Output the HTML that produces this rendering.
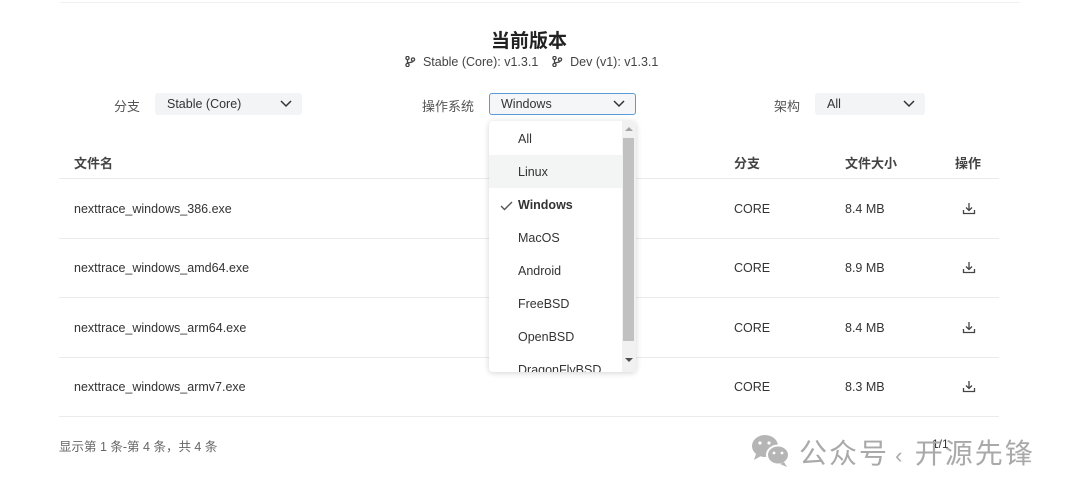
<!DOCTYPE html>
<html><head><meta charset="utf-8"><style>
*{margin:0;padding:0;box-sizing:border-box}
body{width:1080px;height:496px;background:#fff;font-family:"Liberation Sans","Noto Sans CJK SC",sans-serif;color:#333;position:relative;overflow:hidden;font-size:12.5px}
.a{position:absolute;white-space:nowrap}
.sel{position:absolute;height:22px;background:#f3f4f5;border-radius:3px;font-size:12.5px;padding:4px 12px;color:#333}
.chev{position:absolute;right:10px;top:7px}
.hr{position:absolute;left:59px;width:940px;height:1px;background:#ebebeb}
.row{font-size:12.5px;color:#333}
.dd{position:absolute;left:489px;top:121px;width:147px;height:251px;background:#fff;border-radius:4px;box-shadow:0 1px 6px rgba(0,0,0,.18);overflow:hidden}
.it{position:absolute;left:0;width:133px;height:33px;font-size:12.5px;padding-left:29px;line-height:35px;color:#333}
</style></head><body>
<div class="a" style="left:60px;top:2px;width:960px;height:1px;background:#f0f0f0"></div>
<div class="a" style="left:0;width:1080px;top:26px;text-align:center;font-size:19px;font-weight:bold;color:#222;padding-right:22px">当前版本</div>
<div class="a" style="left:405px;top:55px;font-size:12.5px;color:#444">
<svg width="11" height="11" viewBox="0 0 11 11" style="vertical-align:-1px"><circle cx="2.5" cy="2" r="1.6" fill="none" stroke="#444" stroke-width="1.3"/><circle cx="2.5" cy="9" r="1.6" fill="none" stroke="#444" stroke-width="1.3"/><circle cx="8" cy="3.5" r="1.6" fill="none" stroke="#444" stroke-width="1.3"/><path d="M2.5 3.6V7.4M8 5C8 7 3 6 2.5 7.4" stroke="#444" stroke-width="1.3" fill="none"/></svg>&nbsp; Stable (Core): v1.3.1 &nbsp;&nbsp;
<svg width="11" height="11" viewBox="0 0 11 11" style="vertical-align:-1px"><circle cx="2.5" cy="2" r="1.6" fill="none" stroke="#444" stroke-width="1.3"/><circle cx="2.5" cy="9" r="1.6" fill="none" stroke="#444" stroke-width="1.3"/><circle cx="8" cy="3.5" r="1.6" fill="none" stroke="#444" stroke-width="1.3"/><path d="M2.5 3.6V7.4M8 5C8 7 3 6 2.5 7.4" stroke="#444" stroke-width="1.3" fill="none"/></svg>&nbsp; Dev (v1): v1.3.1</div>

<div class="a" style="left:114px;top:96px;color:#555;font-size:13px">分支</div>
<div class="sel" style="left:155px;top:93px;width:147px">Stable (Core)<svg class="chev" width="12" height="8" viewBox="0 0 12 8"><path d="M1 1l5 5 5-5" stroke="#333" stroke-width="1.5" fill="none"/></svg></div>
<div class="a" style="left:422px;top:96px;color:#555;font-size:13px">操作系统</div>
<div class="sel" style="left:489px;top:93px;width:147px;border:1px solid #5b9bd5;background:#f5f6f7;padding:3px 11px">Windows<svg class="chev" width="12" height="8" viewBox="0 0 12 8" style="top:6px"><path d="M1 1l5 5 5-5" stroke="#333" stroke-width="1.5" fill="none"/></svg></div>
<div class="a" style="left:774px;top:96px;color:#555;font-size:13px">架构</div>
<div class="sel" style="left:815px;top:93px;width:110px">All<svg class="chev" width="12" height="8" viewBox="0 0 12 8"><path d="M1 1l5 5 5-5" stroke="#333" stroke-width="1.5" fill="none"/></svg></div>

<div class="a" style="left:74px;top:153px;font-weight:bold;color:#444;font-size:13px">文件名</div>
<div class="a" style="left:734px;top:153px;font-weight:bold;color:#444;font-size:13px">分支</div>
<div class="a" style="left:845px;top:153px;font-weight:bold;color:#444;font-size:13px">文件大小</div>
<div class="a" style="left:955px;top:153px;font-weight:bold;color:#444;font-size:13px">操作</div>
<div class="hr" style="top:178px"></div>
<div class="hr" style="top:238px"></div>
<div class="hr" style="top:297px"></div>
<div class="hr" style="top:357px"></div>
<div class="hr" style="top:416px"></div>

<div class="a row" style="left:74px;top:202px">nexttrace_windows_386.exe</div>
<div class="a row" style="left:74px;top:261px">nexttrace_windows_amd64.exe</div>
<div class="a row" style="left:74px;top:321px">nexttrace_windows_arm64.exe</div>
<div class="a row" style="left:74px;top:380px">nexttrace_windows_armv7.exe</div>
<div class="a row" style="left:734px;top:202px">CORE</div>
<div class="a row" style="left:734px;top:261px">CORE</div>
<div class="a row" style="left:734px;top:321px">CORE</div>
<div class="a row" style="left:734px;top:380px">CORE</div>
<div class="a row" style="left:845px;top:202px">8.4 MB</div>
<div class="a row" style="left:845px;top:261px">8.9 MB</div>
<div class="a row" style="left:845px;top:321px">8.4 MB</div>
<div class="a row" style="left:845px;top:380px">8.3 MB</div>
<svg class="a" style="left:962px;top:202px" width="14" height="13" viewBox="0 0 14 13"><path d="M7 1v7M4 5.5l3 3 3-3M1.5 8v3.5h11V8" stroke="#444" stroke-width="1.3" fill="none"/></svg>
<svg class="a" style="left:962px;top:261px" width="14" height="13" viewBox="0 0 14 13"><path d="M7 1v7M4 5.5l3 3 3-3M1.5 8v3.5h11V8" stroke="#444" stroke-width="1.3" fill="none"/></svg>
<svg class="a" style="left:962px;top:321px" width="14" height="13" viewBox="0 0 14 13"><path d="M7 1v7M4 5.5l3 3 3-3M1.5 8v3.5h11V8" stroke="#444" stroke-width="1.3" fill="none"/></svg>
<svg class="a" style="left:962px;top:380px" width="14" height="13" viewBox="0 0 14 13"><path d="M7 1v7M4 5.5l3 3 3-3M1.5 8v3.5h11V8" stroke="#444" stroke-width="1.3" fill="none"/></svg>

<div class="a" style="left:59px;top:436px;color:#666">显示第 1 条-第 4 条，共 4 条</div>
<div class="a" style="left:932px;top:437px;font-size:12px;color:#333">1/1</div>

<svg class="a" style="left:750px;top:433px" width="42" height="36" viewBox="0 0 42 36"><ellipse cx="15" cy="13" rx="13" ry="11" fill="#b5b5b5"/><path d="M6 21l-2 6 7-4z" fill="#b5b5b5"/><ellipse cx="28" cy="22" rx="11" ry="9.5" fill="#b5b5b5" stroke="#fff" stroke-width="2"/><path d="M34 29l3 5-7-3z" fill="#b5b5b5"/><circle cx="10" cy="10" r="1.6" fill="#fff"/><circle cx="19" cy="10" r="1.6" fill="#fff"/><circle cx="24" cy="20" r="1.4" fill="#fff"/><circle cx="32" cy="20" r="1.4" fill="#fff"/></svg>
<div class="a" style="left:799px;top:432px;font-size:28px;color:#a9a9a9;letter-spacing:2px">公众号<span style="font-size:22px;letter-spacing:0">&nbsp;‹&nbsp;&nbsp;</span>开源先锋</div>

<div class="dd">
<div class="it" style="top:1px">All</div>
<div class="it" style="top:34px;background:#f3f4f4">Linux</div>
<div class="it" style="top:67px;font-weight:bold"><svg style="position:absolute;left:11px;top:13px" width="13" height="10" viewBox="0 0 13 10"><path d="M1 5l3.5 3.5L12 1" stroke="#555" stroke-width="1.4" fill="none"/></svg>Windows</div>
<div class="it" style="top:100px">MacOS</div>
<div class="it" style="top:133px">Android</div>
<div class="it" style="top:166px">FreeBSD</div>
<div class="it" style="top:199px">OpenBSD</div>
<div class="it" style="top:232px">DragonFlyBSD</div>
<div style="position:absolute;left:133px;top:0;width:14px;height:251px;background:#f1f1f1"></div>
<div style="position:absolute;left:134px;top:17px;width:11px;height:203px;background:#c1c1c1"></div>
<svg style="position:absolute;left:136px;top:5px" width="8" height="6"><path d="M0 5h8L4 1z" fill="#a3a3a3"/></svg>
<svg style="position:absolute;left:136px;top:236px" width="8" height="6"><path d="M0 1h8L4 5z" fill="#505050"/></svg>
</div>
</body></html>
